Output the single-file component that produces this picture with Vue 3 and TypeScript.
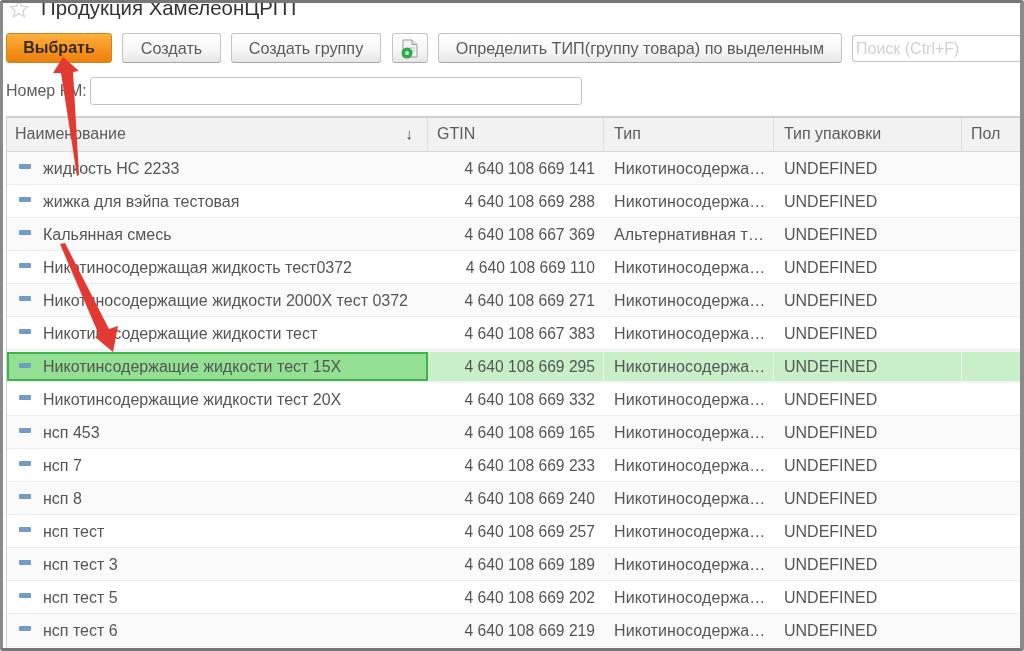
<script setup lang="ts">
interface Row { name: string; gtin: string; type: string; selected?: boolean }
const nic = 'Никотиносодержа…'
const rows: Row[] = [
  { name: 'жидкость НС 2233', gtin: '4 640 108 669 141', type: nic },
  { name: 'жижка для вэйпа тестовая', gtin: '4 640 108 669 288', type: nic },
  { name: 'Кальянная смесь', gtin: '4 640 108 667 369', type: 'Альтернативная т…' },
  { name: 'Никотиносодержащая жидкость тест0372', gtin: '4 640 108 669 110', type: nic },
  { name: 'Никотиносодержащие жидкости 2000Х тест 0372', gtin: '4 640 108 669 271', type: nic },
  { name: 'Никотиносодержащие жидкости тест', gtin: '4 640 108 667 383', type: nic },
  { name: 'Никотинсодержащие жидкости тест 15Х', gtin: '4 640 108 669 295', type: nic, selected: true },
  { name: 'Никотинсодержащие жидкости тест 20Х', gtin: '4 640 108 669 332', type: nic },
  { name: 'нсп 453', gtin: '4 640 108 669 165', type: nic },
  { name: 'нсп 7', gtin: '4 640 108 669 233', type: nic },
  { name: 'нсп 8', gtin: '4 640 108 669 240', type: nic },
  { name: 'нсп тест', gtin: '4 640 108 669 257', type: nic },
  { name: 'нсп тест 3', gtin: '4 640 108 669 189', type: nic },
  { name: 'нсп тест 5', gtin: '4 640 108 669 202', type: nic },
  { name: 'нсп тест 6', gtin: '4 640 108 669 219', type: nic },
]
</script>

<template>
  <div class="frame">
    <div class="title-row">
      <svg class="star" width="20" height="20" viewBox="0 0 20 20">
        <path d="M10 1.5l2.5 5.6 6 .6-4.5 4 1.3 6L10 14.6l-5.3 3.1 1.3-6-4.5-4 6-.6z" fill="#fff" stroke="#d4d4d4" stroke-width="1.3" />
      </svg>
      <span class="title">Продукция ХамелеонЦРПТ</span>
    </div>

    <div class="toolbar">
      <button class="btn primary">Выбрать</button>
      <button class="btn w-create">Создать</button>
      <button class="btn w-group">Создать группу</button>
      <button class="btn w-icon" aria-label="Добавить">
        <svg width="20" height="22" viewBox="0 0 20 22">
          <path d="M3 3h9l5 4.500V20H3z" fill="#f4f4f4" stroke="#9a9a9a" stroke-width="1" />
          <path d="M12 3v4.500h5" fill="#e2e2e2" stroke="#9a9a9a" stroke-width="1" />
          <path d="M9 11h6M9 14h6" stroke="#aebfcd" stroke-width="1" />
          <circle cx="7" cy="16" r="5.500" fill="#2fa84a" />
          <circle cx="7" cy="16" r="2" fill="#cfeed5" />
        </svg>
      </button>
      <button class="btn w-define">Определить ТИП(группу товара) по выделенным</button>
      <div class="search">Поиск (Ctrl+F)</div>
    </div>

    <div class="filter">
      <label class="filter-label">Номер КМ:</label>
      <div class="filter-input"></div>
    </div>

    <div class="table">
      <div class="row head">
        <div class="cell c-name head-name"><span>Наименование</span><span class="sort">↓</span></div>
        <div class="cell c-gtin">GTIN</div>
        <div class="cell c-type">Тип</div>
        <div class="cell c-pack">Тип упаковки</div>
        <div class="cell c-sex">Пол</div>
      </div>
      <div v-for="(r, i) in rows" :key="i" class="row body" :class="{ odd: i % 2 === 0, selected: r.selected }">
        <div class="cell c-name">
          <span class="dash"></span>
          <span class="name">{{ r.name }}</span>
        </div>
        <div class="cell c-gtin num">{{ r.gtin }}</div>
        <div class="cell c-type">{{ r.type }}</div>
        <div class="cell c-pack">UNDEFINED</div>
        <div class="cell c-sex"></div>
      </div>
    </div>

    <svg class="arrows" width="1024" height="651" viewBox="0 0 1024 651">
      <path d="M63 57 L79 71 L73 72 L79 175 L77 176 L61 73 L53 73 Z" fill="#e23a32" />
      <path d="M60 244 L65 243 L109 329 L118 326 L113 352 L95 337 L99 335 Z" fill="#e23a32" />
    </svg>
  </div>
</template>

<style>
html, body { margin: 0; background: #fff; }
</style>

<style scoped>
.frame {
  position: relative;
  box-sizing: border-box;
  width: 1024px;
  height: 651px;
  overflow: hidden;
  background: #fff;
  border-top: 3px solid #777;
  border-left: 3px solid #8a8a8a;
  border-right: 4px solid #8a8a8a;
  border-bottom: 3px solid #777;
  border-radius: 3px;
  padding-left: 3px;
  font-family: "Liberation Sans", Arial, sans-serif;
  color: #555;
  font-size: 16px;
  filter: blur(0.5px);
}
.title-row {
  height: 30px;
  display: flex;
  align-items: flex-start;
  gap: 12px;
  overflow: hidden;
  padding-left: 3px;
}
.star { margin-top: -4px; flex: none; }
.title { font-size: 20.4px; line-height: 20px; margin-top: -5px; color: #333; white-space: nowrap; }
.toolbar {
  display: flex;
  align-items: flex-start;
  gap: 10px;
  height: 31px;
}
.btn {
  box-sizing: border-box;
  height: 30px;
  padding: 0;
  border: 1px solid #c4c4c4;
  border-bottom-color: #a8a8a8;
  border-radius: 3px;
  background: linear-gradient(#ffffff, #f6f6f6 60%, #e6e6e6);
  font: inherit;
  font-size: 16.2px;
  color: #5a5a5a;
  display: flex;
  align-items: center;
  justify-content: center;
}
.primary {
  width: 106px;
  font-size: 16px;
  border-color: #d08418;
  background: linear-gradient(#fbb040, #f7941d 55%, #e9800e);
  color: #352a1c;
  font-weight: bold;
}
.w-create { width: 99px; }
.w-group { width: 150px; }
.w-icon { width: 36px; margin-left: 1px; }
.w-define { width: 404px; }
.search {
  box-sizing: border-box;
  flex: 1;
  height: 27px;
  align-self: center;
  border: 1px solid #c4c4c4;
  border-right: none;
  border-radius: 3px 0 0 3px;
  padding-left: 3px;
  line-height: 25px;
  color: #d0d0d0;
}
.filter {
  display: flex;
  align-items: center;
  height: 28px;
  margin-top: 13px;
}
.filter-label { width: 84px; color: #5c5c5c; white-space: nowrap; }
.filter-input {
  box-sizing: border-box;
  width: 492px;
  height: 28px;
  border: 1px solid #c4c4c4;
  border-radius: 3px;
}
.table {
  margin-top: 11px;
  border-top: 2px solid #cfcfcf;
  border-left: 1px solid #d2d2d2;
}
.row { display: flex; box-sizing: border-box; }
.head {
  height: 34px;
  background: #f2f2f2;
  border-bottom: 1px solid #d6d6d6;
}
.body {
  height: 33px;
  background: #fff;
  border-bottom: 1px solid #ececec;
}
.body.odd { background: #fafafa; }
.cell {
  box-sizing: border-box;
  display: flex;
  align-items: center;
  padding-left: 10px;
  white-space: nowrap;
  flex: none;
}
.body .cell { padding-top: 1px; }
.head .cell { box-shadow: inset -1px 0 0 #dcdcdc; color: #5c5c5c; padding-bottom: 2px; }
.head .c-gtin { padding-left: 9px; }
.head .c-sex { box-shadow: none; padding-left: 9px; }
.c-name { width: 421px; }
.body .c-name { padding-left: 12px; }
.head-name { justify-content: space-between; padding-left: 8px; padding-right: 15px; }
.sort { font-size: 15px; color: #444; }
.c-gtin { width: 176px; }
.num { justify-content: flex-end; padding-right: 9px; padding-left: 0; font-size: 15.65px; }
.c-type { width: 170px; letter-spacing: 0.1px; }
.c-pack { width: 188px; }
.c-sex { flex: 1; }
.dash {
  width: 12px;
  height: 5px;
  margin-right: 12px;
  margin-top: -4px;
  border-radius: 1px;
  background: #6f9dc4;
  flex: none;
}
.selected {
  background: #c8efc8 !important;
  border-top: 2px solid #f4f4f4;
  border-bottom: 2px solid #f4f4f4;
}
.selected .cell { box-shadow: inset -1px 0 0 #e6f6e6; }
.selected .c-name {
  background: #93e093;
  box-shadow: inset 0 0 0 2px #3cb44b;
}
.selected .c-sex { box-shadow: none; }
.arrows { position: absolute; left: -3px; top: -3px; pointer-events: none; }
</style>
